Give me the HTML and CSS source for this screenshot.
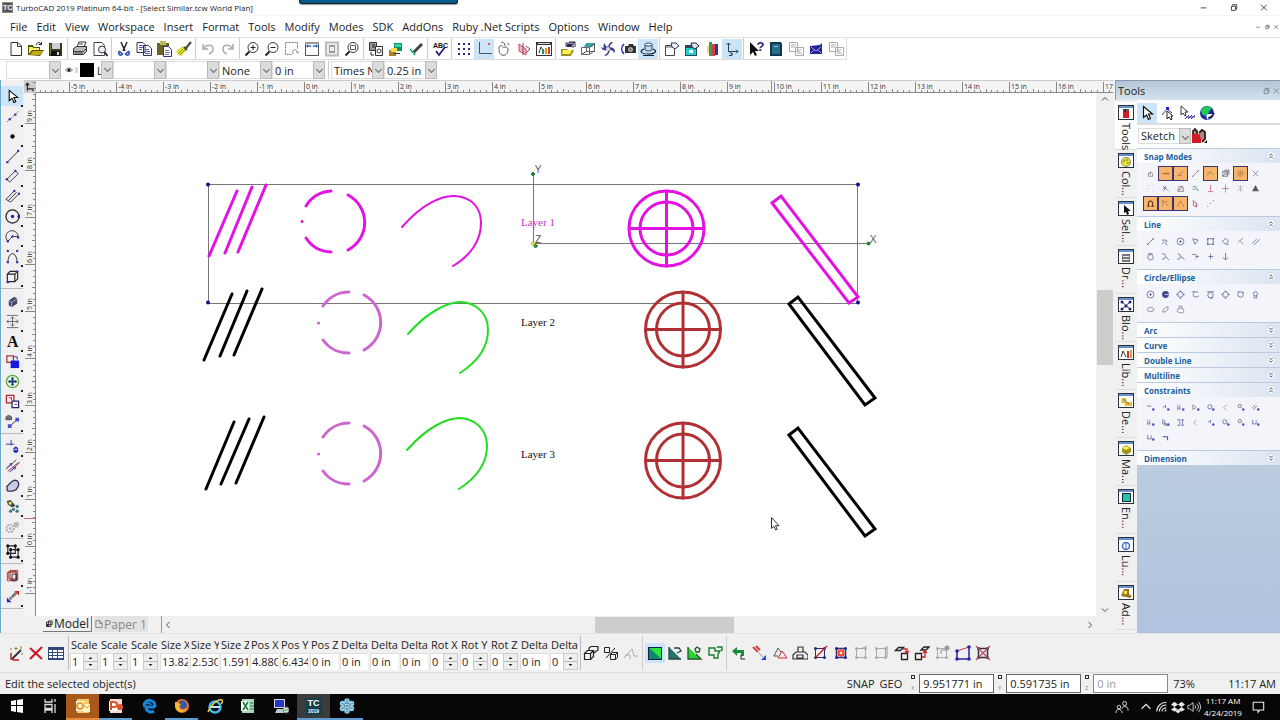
FILE: index.html
```html
<!DOCTYPE html>
<html lang="en">
<head>
<meta charset="utf-8">
<title>TurboCAD 2019 Platinum 64-bit - [Select Similar.tcw World Plan]</title>
<link rel="stylesheet" href="styles.css">
</head>
<body>
<header class="titlebar">
  <span class="app-badge">TC</span>
  <h1 class="app-title">TurboCAD 2019 Platinum 64-bit - [Select Similar.tcw World Plan]</h1>
  <div class="share-tab"></div>
  <div class="window-controls" data-icons="minimize restore close"></div>
</header>
<nav class="menubar">
  <button>File</button><button>Edit</button><button>View</button><button>Workspace</button><button>Insert</button><button>Format</button><button>Tools</button><button>Modify</button><button>Modes</button><button>SDK</button><button>AddOns</button><button>Ruby .Net Scripts</button><button>Options</button><button>Window</button><button>Help</button>
  <div class="doc-controls" data-icons="minimize restore close"></div>
</nav>
<div class="toolbar">
  <div class="group" data-icons="new open save"></div>
  <div class="group" data-icons="print preview"></div>
  <div class="group" data-icons="cut copy paste brush"></div>
  <div class="group" data-icons="undo redo"></div>
  <div class="group" data-icons="zoomin zoomout zoomwin extents fullview zoomsel"></div>
  <div class="group" data-icons="blocks layers pen"></div>
  <div class="group" data-icons="spell"></div>
  <div class="group" data-icons="grid *ortho hand mirror chart"></div>
  <div class="group" data-icons="openview box3d fan camera *orbit"></div>
  <div class="group" data-icons="props propsview palettes *axes"></div>
  <div class="group" data-icons="help book pagecopy mail pagecopy"></div>
</div>
<div class="propbar">
  <label class="combo wide"><select aria-label="Style"><option></option></select></label>
  <div class="layer-box"><span data-icon="eye"></span><span class="lockmark"></span><span class="swatch"></span></div>
  <label class="combo layer"><select aria-label="Layer"><option>L</option></select></label>
  <label class="combo"><select aria-label="Pen"><option></option></select></label>
  <label class="combo"><select aria-label="Pattern"><option></option></select></label>
  <label class="combo"><select aria-label="Brush"><option>None</option></select></label>
  <label class="combo"><select aria-label="Line width"><option>0 in</option></select></label>
  <span class="vsep"></span>
  <label class="combo"><select aria-label="Font"><option>Times New</option></select></label>
  <label class="combo"><select aria-label="Text height"><option>0.25 in</option></select></label>
</div>
<div class="workspace">
  <aside class="toolbox">
    <div class="vgroup" data-icons="*arrow cline point line dline mline circle arc spline cube"></div>
    <div class="vgroup" data-icons="solid dimension text modifyfill target swap edit"></div>
    <div class="vgroup" data-icons="snap parallel poly flash gears"></div>
    <div class="vgroup" data-icons="group"></div>
    <div class="vgroup" data-icons="redbox swaparrow"></div>
  </aside>
  <main class="document">
    <div class="ruler-row">
      <div class="origin" data-icon="origin"></div>
      <svg class="hruler" id="hruler" role="img" aria-label="Horizontal ruler"></svg>
    </div>
    <div class="canvas-row">
      <svg class="vruler" id="vruler" role="img" aria-label="Vertical ruler"></svg>
      <svg class="canvas" role="img" aria-label="Drawing">
        <g transform="translate(-36 -92)" fill="none" stroke-linecap="round">
          <g stroke="#777" stroke-width="1">
            <path d="M208.500 183.500H858M208.500 302.500H858M208.500 183V302M857.500 183V302M533.500 173V243M533 242.500H869"/>
          </g>
          <g stroke="#e312e3" stroke-width="3">
            <path d="M237 190L209 255M252 186L225 252M266 184L238 251"/>
            <path d="M306 205A31 31 0 0 1 331 190M348 194A31 31 0 0 1 348 249M306 237A31 31 0 0 0 331 251M302 220.500h.1"/>
            <path stroke-width="2" d="M402 226C423 202 443 194 455 195C471 196 481 206 481 222C481 240 470 255 453 265"/>
            <g id="wheel"><circle cx="666.500" cy="227.500" r="37.500"/><circle cx="666.500" cy="227.500" r="26.500"/><path d="M629 227.500h75M666.500 190v75"/></g>
            <path d="M772 202L781 195L858 296L849 302Z"/>
          </g>
          <g stroke="#000" stroke-width="3">
            <path d="M232 293L204 359M247 290L220 355M262 288L234 354"/>
            <path d="M789 303L798 296L875 397L865 404Z"/>
            <path d="M234 421L206 488M249 418L221 483M264 416L236 482"/>
            <path d="M789 434L798 427L875 528L865 535Z"/>
          </g>
          <g stroke="#cc66cc" stroke-width="3">
            <path id="dash" d="M323 305A31 31 0 0 1 349 291M364 294A31 31 0 0 1 364 349M323 339A31 31 0 0 0 349 352M318.500 322h.1"/>
            <path d="M323 436A31 31 0 0 1 349 422M364 425A31 31 0 0 1 364 480M323 470A31 31 0 0 0 349 483M318.500 453h.1"/>
          </g>
          <g stroke="#22dd22" stroke-width="2">
            <path d="M408 333C429 309 449 301 461 301C477 302 488 313 488 329C488 347 477 361 460 372"/>
            <path d="M407 449C428 425 448 417 460 417C476 418 487 429 487 445C487 463 476 477 459 488"/>
          </g>
          <g stroke="#b03034" stroke-width="3">
            <circle cx="683" cy="328.500" r="37.500"/><circle cx="683" cy="328.500" r="26.500"/><path d="M646 328.500h74M683 291v75"/>
            <circle cx="683" cy="459.500" r="37.500"/><circle cx="683" cy="459.500" r="26.500"/><path d="M646 459.500h74M683 422v75"/>
          </g>
          <g fill="#10108a"><circle cx="208" cy="183.500" r="2"/><circle cx="858" cy="183.500" r="2"/><circle cx="208" cy="301.500" r="2"/><circle cx="858" cy="301.500" r="2"/></g>
          <g fill="#2fa048" stroke="#186c2c"><circle cx="533" cy="173" r="1.500"/><circle cx="868.500" cy="242.500" r="1.500"/><circle cx="535.500" cy="245" r="1.500"/><circle cx="533" cy="242.500" r="1.500" fill="#ff8" stroke="#aa0"/></g>
          <g class="axis-text"><text x="535" y="172">Y</text><text x="535" y="242">Z</text><text x="870" y="242">X</text></g>
          <g class="layer-text"><text class="pick" x="521" y="225">Layer 1</text><text x="521" y="325">Layer 2</text><text x="521" y="457">Layer 3</text></g>
          <path d="M771.500 517v10.500l2.400-2.200 1.700 3.700 1.600-.8-1.700-3.500h3.200z" fill="#fff" stroke="#333"/>
        </g>
      </svg>
      <div class="vscroll"><span data-icon="up"></span><i class="track-a"></i><i class="thumb"></i><i class="track-b"></i><span data-icon="down"></span></div>
    </div>
    <div class="sheet-row">
      <div class="sheet-pad"></div>
      <button class="sheet active"><span data-icon="model"></span>Model</button>
      <button class="sheet"><span data-icon="sheet"></span>Paper 1</button>
      <div class="hscroll"><span data-icon="left"></span><i class="track-a"></i><i class="thumb"></i><i class="track-b"></i><span data-icon="right"></span></div>
    </div>
  </main>
  <aside class="dock">
    <header class="dock-head"><h2>Tools</h2><span class="dock-ctl" data-icons="restore close"></span></header>
    <div class="dock-body">
      <nav class="dock-tabs">
        <button class="on"><span data-icon="t-tools"></span>Tools</button>
        <button><span data-icon="t-color"></span>Col...</button>
        <button><span data-icon="t-select"></span>Sel...</button>
        <button><span data-icon="t-draw"></span>Dr...</button>
        <button><span data-icon="t-blocks"></span>Blo...</button>
        <button><span data-icon="t-library"></span>Lib...</button>
        <button><span data-icon="t-design"></span>De...</button>
        <button><span data-icon="t-material"></span>Ma...</button>
        <button><span data-icon="t-environment"></span>En...</button>
        <button><span data-icon="t-luminance"></span>Lu...</button>
        <button><span data-icon="t-advanced"></span>Ad...</button>
      </nav>
      <div class="palette">
        <div class="palette-top">
          <div class="group plain" data-icons="*arrow nodeedit multiedit globe"></div>
          <div class="palette-pick"><label class="combo"><select aria-label="Tool set"><option>Sketch</option></select></label><span data-icon="toolbag"></span></div>
        </div>
        <section><h3>Snap Modes<span data-icon="collapse"></span></h3><div class="tiles" data-icons="s-hand *s-mid *s-vertex s-red *s-arc s-box *s-center s-x s-dots s-mag s-quad s-curve s-tee s-plus s-star s-tree *s-magnet *s-apex *s-tan s-pink s-pts"></div></section>
        <section><h3>Line<span data-icon="collapse"></span></h3><div class="tiles" data-icons="l-line l-poly l-center l-tri l-rect l-rot l-perp l-par l-circ l-tan l-tan2 l-tan3 l-cross l-down"></div></section>
        <section><h3>Circle/Ellipse<span data-icon="collapse"></span></h3><div class="tiles" data-icons="l-center c-solid c-dots c-open c-tan c-dots c-ear c-pin c-ell c-rotell c-cap"></div></section>
        <section><h3>Arc<span data-icon="expand"></span></h3></section>
        <section><h3>Curve<span data-icon="expand"></span></h3></section>
        <section><h3>Double Line<span data-icon="expand"></span></h3></section>
        <section><h3>Multiline<span data-icon="expand"></span></h3></section>
        <section><h3>Constraints<span data-icon="collapse"></span></h3><div class="tiles" data-icons="k-a k-b k-c k-d k-e k-f k-g k-h k-c k-i k-j k-f k-b k-e k-g k-k k-k k-l"></div></section>
        <section><h3>Dimension<span data-icon="expand"></span></h3></section>
      </div>
    </div>
  </aside>
</div>
<div class="inspector">
  <div class="group plain first" data-icons="wand delete table"></div>
  <div class="fields" id="fields"></div>
  <div class="group" data-icons="cubes cubes2 graynode"></div>
  <div class="group" data-icons="*fillbox fillpart fillnode outline"></div>
  <div class="group spread" data-icons="back rotate triangles stack scale gridred graybox graybox2 copybox copybox2 graybox3 skew nobox"></div>
</div>
<footer class="statusbar">
  <span class="hint">Edit the selected object(s)</span>
  <span class="flag">SNAP</span><span class="flag">GEO</span>
  <label class="coord"><span><b></b>X</span><input aria-label="X coordinate" value="9.951771 in"></label>
  <label class="coord"><span><b></b>Y</span><input aria-label="Y coordinate" value="0.591735 in"></label>
  <label class="coord"><span><b></b>Z</span><input class="dim" aria-label="Z coordinate" value="0 in"></label>
  <span class="zoomval">73%</span><span class="time">11:17 AM</span>
</footer>
<div class="taskbar">
  <button aria-label="Start"><span data-icon="w-start"></span></button>
  <button aria-label="Task view"><span data-icon="w-tasks"></span></button>
  <button class="alert" aria-label="Outlook"><span data-icon="w-outlook"></span></button>
  <button class="run" aria-label="PowerPoint"><span data-icon="w-ppt"></span></button>
  <button aria-label="Edge"><span data-icon="w-edge"></span></button>
  <button class="run" aria-label="Firefox"><span data-icon="w-firefox"></span></button>
  <button aria-label="Internet Explorer"><span data-icon="w-ie"></span></button>
  <button aria-label="Excel"><span data-icon="w-excel"></span></button>
  <button aria-label="Remote desktop"><span data-icon="w-remote"></span></button>
  <button class="run current" aria-label="TurboCAD"><span class="tc">TC<small>2019</small></span></button>
  <button class="run" aria-label="GoToWebinar"><span data-icon="w-flower"></span></button>
  <div class="tray">
    <span class="people" data-icon="w-people"></span><span data-icon="w-up"></span><span data-icon="w-wifi"></span><span data-icon="w-dropbox"></span><span data-icon="w-sound"></span>
    <div class="clock"><span>11:17 AM</span><span>4/24/2019</span></div>
    <span data-icon="w-note"></span>
  </div>
</div>
<script src="app.js"></script>
</body>
</html>
```

FILE: styles.css
```css
* { box-sizing: border-box; }
body { margin: 0; height: 100vh; min-height: 720px; display: flex; flex-direction: column; overflow: hidden; background: #fff; color: #222; font: 11px "Open Sans", "Noto Sans", sans-serif; }
button { margin: 0; padding: 0; border: 0; background: none; font: inherit; color: inherit; }
h1, h2, h3 { margin: 0; font-weight: normal; }
svg { display: block; flex: none; }
[data-icon] { display: flex; align-items: center; justify-content: center; flex: none; }

.titlebar { flex: none; height: 16px; display: flex; align-items: center; padding: 0 2px; position: relative; border-bottom: 1px solid #f6f6f6; }
.app-badge { width: 11px; height: 11px; background: #555; border: 1px solid #888; color: #fff; font: bold 7px/9px "Liberation Sans", sans-serif; text-align: center; margin-right: 3px; }
.app-title { font-size: 8px; line-height: 15px; }
.share-tab { position: absolute; left: 299px; top: 0; width: 159px; height: 4px; background: #0a5a8c; border: 1px solid #123; border-top: 0; border-radius: 0 0 3px 3px; box-shadow: 0 1px 1px #999; }
.window-controls { margin-left: auto; display: flex; }
.window-controls button { width: 30px; display: flex; justify-content: center; }
.menubar { flex: none; height: 22px; display: flex; align-items: center; padding-left: 10px; gap: 9px; border-bottom: 1px solid #e2e2e2; }
.doc-controls { margin-left: auto; display: flex; }
.doc-controls button { width: 9px; display: flex; justify-content: center; }
.doc-controls svg { width: 8px; height: 8px; }

.toolbar { flex: none; align-self: flex-start; height: 22px; display: flex; padding-left: 6px; border: solid #ddd; border-width: 0 1px 1px 0; }
.group { display: flex; align-items: center; flex: none; }
.group + .group { margin-left: 1px; padding-left: 2px; border-left: 1px solid #ccc; }
.group button { width: 20px; height: 20px; display: flex; align-items: center; justify-content: center; }
.group .active, .vgroup .active { background: #cce4f7; }
.propbar { flex: none; height: 20px; display: flex; align-items: center; padding: 1px 6px; }
.combo { position: relative; display: flex; width: 53px; height: 18px; flex: none; border: 1px solid #ddd; border-right: 0; background: #fff; }
.combo.wide { width: 55px; }
.combo.layer { width: 18px; border: 0; }
.combo select { appearance: none; width: 100%; margin: 0; padding: 0 9px 0 2px; border: 0; border-radius: 0; background: none; font: inherit; color: #222; outline: 0; }
.combo.layer select { padding: 0 0 0 2px; }
.combo::before { content: ""; position: absolute; right: 0; top: -1px; bottom: -1px; width: 10px; background: #dcdcdc; border: 1px solid #bbb; }
.combo.layer::before { top: 0; bottom: 0; }
.combo::after { content: ""; position: absolute; right: 3px; top: 5px; width: 4px; height: 4px; border: solid #666; border-width: 0 1px 1px 0; transform: rotate(45deg); }
.layer-box { display: flex; align-items: center; justify-content: flex-end; width: 34px; gap: 2px; padding-right: 1px; }
.lockmark { width: 3px; height: 6px; background: #ddd; }
.swatch { width: 14px; height: 14px; background: #000; }
.vsep { width: 1px; height: 18px; margin: 0 2px 0 3px; background: #ccc; }

.workspace { flex: 1; min-height: 0; display: flex; background: #f0f0f0; border-bottom: 1px solid #e4e4e4; }
.toolbox { flex: none; width: 24px; padding: 6px 1px 0 0; border-left: 1px solid #6fa8c8; }
.vgroup { border-bottom: 1px solid #bbb; margin-bottom: 2px; padding-bottom: 2px; }
.vgroup button { position: relative; width: 22px; height: 20px; display: flex; align-items: center; justify-content: center; }
.vgroup button::after { content: ""; position: absolute; right: 0; bottom: -1px; width: 2px; height: 2px; background: #222; }
.document { flex: 1; min-width: 0; display: flex; flex-direction: column; }
.ruler-row { flex: none; height: 13px; display: flex; border-top: 1px solid #ccc; }
.origin { width: 12px; background: #ccc; }
.hruler { flex: 1; min-width: 0; height: 12px; background: #f4f4f4; }
.vruler { width: 12px; height: 100%; background: #f4f4f4; overflow: visible; }
.hruler text, .vruler text { font: 7px "Open Sans", sans-serif; fill: #333; }
.hruler path, .vruler path { stroke: #888; fill: none; }
.canvas-row { flex: 1; min-height: 0; display: flex; }
.canvas { flex: 1; min-width: 0; height: 100%; background: #fff; }
.axis-text text { font: 11px "Open Sans", sans-serif; fill: #555; }
.layer-text text { font: 11px "Liberation Serif", serif; fill: #111; }
.layer-text .pick { fill: #cc33cc; }
.vscroll { flex: none; width: 17px; display: flex; flex-direction: column; align-items: center; padding: 0; }
.vscroll span, .hscroll span { width: 12px; height: 12px; }
.thumb { background: #cdcdcd; }
.vscroll .thumb { width: 16px; flex: 75; }
.vscroll .track-a { flex: 186; }
.vscroll .track-b { flex: 240; }
.sheet-row { flex: none; height: 17px; display: flex; font-size: 12px; }
.sheet-pad { width: 19px; }
.sheet { display: flex; align-items: center; width: 49px; height: 16px; padding: 0 0 0 1px; border: solid #777; border-width: 0 1px 1px 0; line-height: 15px; white-space: nowrap; }
.sheet:not(.active) { width: 54px; margin-left: 2px; padding: 0; border: 0; color: #888; background: #e3e3e3; }
.hscroll { flex: 1; display: flex; align-items: center; margin: 0 17px 0 13px; border-left: 1px solid #999; }
.hscroll .thumb { height: 16px; flex: 140; }
.hscroll .track-a { flex: 421; }
.hscroll .track-b { flex: 350; }

.dock { flex: none; width: 165px; margin-left: 2px; display: flex; flex-direction: column; }
.dock-head { height: 20px; flex: none; display: flex; align-items: center; justify-content: space-between; padding-left: 2px; background: linear-gradient(#b3c6da, #d5e2ef); border-top: 1px solid #8898a8; border-left: 1px solid #99a; }
.dock-head h2 { font-size: 11px; line-height: 18px; }
.dock-ctl { display: flex; opacity: .5; }
.dock-ctl button { width: 10px; }
.dock-ctl svg { width: 12px; height: 12px; }
.dock-body { flex: 1; min-height: 0; display: flex; }
.dock-tabs { flex: none; width: 22px; display: flex; flex-direction: column; padding-top: 2px; }
.dock-tabs button { height: 48px; flex: none; writing-mode: vertical-rl; display: flex; align-items: center; gap: 3px; padding-top: 3px; border-bottom: 1px solid #ddd; font-size: 11px; line-height: 20px; white-space: nowrap; }
.dock-tabs button.on { background: #fff; }
.dock-tabs [data-icon] { width: 17px; height: 15px; }
.palette { flex: 1; min-width: 0; background: linear-gradient(#c6d3de, #b9cbdf 75%, #b0c2dd); }
.palette-top { height: 48px; background: #fff; padding-top: 2px; }
.palette-top .group { border-bottom: 2px solid #ddd; height: 23px; }
.palette-pick { display: flex; align-items: center; height: 21px; padding-left: 1px; }
.palette-pick .combo { height: 16px; line-height: 14px; }
.palette section { background: #f3f5fa; }
.palette h3 { display: flex; justify-content: space-between; align-items: center; height: 15px; padding: 0 2px 0 7px; border-top: 1px solid #b8cbe0; background: linear-gradient(90deg, #fff, #dce5f1); color: #1b5f9c; font-size: 8px; font-weight: bold; }
.tiles { display: grid; grid-template-columns: repeat(8, 15px); grid-auto-rows: 15px; padding: 3px 0 5px 6px; }
.tiles button { display: flex; align-items: center; justify-content: center; }
.tiles .active { background: #f6b56a; border: 1px solid #3c3470; }

.inspector { flex: none; height: 39px; display: flex; align-items: center; background: #f0f0f0; border-bottom: 1px solid #ddd; padding-left: 6px; }
.inspector .group { height: 34px; }
.inspector .first { padding-right: 2px; border-right: 1px solid #bbb; margin-right: 1px; }
.fields { display: flex; }
.field { width: 30px; flex: none; }
.field label { display: block; width: 29px; overflow: hidden; white-space: nowrap; line-height: 16px; padding-left: 1px; }
.spin { display: flex; height: 17px; padding-right: 2px; }
.spin input { min-width: 0; width: 100%; flex: 1; border: solid #ddd; border-width: 1px 0 0 1px; background: #fff; padding: 0 0 0 1px; font: inherit; color: #222; }
.spin span { width: 15px; flex: none; display: flex; align-items: center; justify-content: center; background: #eee; border: 1px solid #ccc; }
.fields + .group { border-left: 1px solid #bbb; }
.spread { width: 267px; justify-content: space-between; }

.statusbar { flex: none; height: 21px; display: flex; align-items: center; background: #f0f0f0; padding: 0 4px 0 5px; white-space: nowrap; }
.hint { flex: 1; }
.flag { margin-right: 5px; }
.coord { display: flex; align-items: center; height: 19px; margin-left: 4px; }
.coord > span { width: 8px; font-size: 5px; line-height: 7px; color: #777; display: flex; flex-direction: column; gap: 6px; }
.coord b { width: 4px; height: 4px; border: 1px solid #333; }
.coord input { width: 75px; height: 19px; border: 1px solid #666; background: #fff; padding: 0 3px; font: inherit; color: #222; }
.coord .dim { color: #999; border-color: #888; }
.zoomval { width: 55px; margin-left: 5px; }

.taskbar { flex: none; height: 26px; display: flex; background: #070707; color: #fff; }
.taskbar > button { width: 33px; display: flex; align-items: center; justify-content: center; border-bottom: 2px solid transparent; }
.taskbar .run { border-bottom-color: #5e9bd0; }
.taskbar .alert { background: #a85a1c; border-bottom-color: #e88a3a; }
.taskbar .current { background: #3b3b3b; }
.tc { width: 16px; height: 17px; background: #123f50; font: bold 9px/11px "Liberation Sans", sans-serif; text-align: center; }
.tc small { display: block; font-size: 5px; line-height: 5px; }
.tray { margin-left: auto; display: flex; align-items: center; padding-right: 14px; }
.tray > [data-icon] { width: 16px; }
.tray .people { width: 32px; }
.tray svg { width: 14px; height: 14px; }
.clock { display: flex; flex-direction: column; align-items: center; width: 42px; margin-right: 6px; font-size: 8px; line-height: 12px; white-space: nowrap; }
```

FILE: app.js
```javascript
const s = (d, c = '#222', w = 1, f = 'none') => `<path d="${d}" stroke="${c}" stroke-width="${w}" fill="${f}"/>`;
const f = (d, c) => `<path d="${d}" fill="${c}"/>`;
const nodes = (pts, c = '#33a', r = 1.3) => pts.map(([x, y]) => `<circle cx="${x}" cy="${y}" r="${r}" fill="${c}"/>`).join('');
const lens = s('M5.500 10.500L1.500 14.500', '#222', 2) + '<circle cx="9" cy="6.500" r="5" fill="#fff" stroke="#333"/>';
const tag = inner => f('M0 0h16v15H0z', '#26333f') + f('M1 3h14v11H1z', '#fff') + f('M1 1h14v2H1z', '#6a90cc') + inner;
const tile = (bg, inner) => f('M2 1h12v14H2z', bg) + f('M1 3h8v10H1z', '#fff') + inner;
const box = (c, w = 1) => s('M3.500 3.500h9v9h-9z', c, w) + nodes([[3.500, 3.500], [12.500, 3.500], [3.500, 12.500], [12.500, 12.500]], c, 1.5);

const icons = {
  minimize: s('M4.500 8.500h7'), restore: s('M5.500 6.500h5v5h-5zM7 6V4.500h5V10h-1'), close: s('M5 4.500l7 7M12 4.500l-7 7'),
  up: s('M5 9.500l3-3 3 3', '#555'), down: s('M5 6.500l3 3 3-3', '#555'), left: s('M9.500 5l-3 3 3 3', '#555'), right: s('M6.500 5l3 3-3 3', '#555'),
  new: s('M3 1.500h7l3.500 3.500v9.500H3zM9.500 1.500v4h4', '#333', 1, '#fff'),
  open: f('M0 14V4h5l1 2h6v3h4l-4 6z', '#555500') + f('M1 6h3l2 1h5v2H4L1 13z', '#ffee70') + f('M5 10h10l-3 4H2z', '#c5a810') + s('M8 4c2-4 4-3 5 0M10.500 3.500h3V1'),
  save: f('M1 2h13v13H1z', '#333a20') + f('M4 2h8v6H4z', '#c9d0d8') + f('M3 10h9v5H3z', '#111') + f('M9 11h2v3H9z', '#ddd') + f('M2 3h1v10H2z', '#798030'),
  print: s('M5 6l2-5h7l-2 5z', '#333', 1, '#fff') + s('M1.500 7.500l3-2h10v5l-3 3h-10z', '#333', 1, '#b9b9b9') + s('M2 10.500h9.500l3-3M3 12h8M7 3h4', '#444'),
  preview: s('M2 1.500h8l2.500 3v10H2z', '#444', 1, '#fff') + '<circle cx="10" cy="8.500" r="3.500" fill="#eef" stroke="#333"/>' + s('M12.500 11l3 4', '#333', 2),
  cut: s('M5 1l4 9M11 1L7 10', '#223', 1.500) + s('M3.500 10.500a2 2 0 1 0 3 2.500zM12.500 10.500a2 2 0 1 1-3 2.500z', '#2450b8', 1.600),
  copy: s('M1 1.500h6l2 2v8H1zM7.500 4.500h5l3 3v7h-8z', '#334', 1, '#fff') + s('M3 4.500h4M3 6.500h4M3 8.500h3M9 8.500h4M9 10.500h5M9 12.500h5', '#55b'),
  paste: f('M1 2h12v12H1z', '#67652a') + f('M4 0h6v4H4z', '#b9bd60') + s('M7.500 5.500h5l3 3v7h-8z', '#338', 1, '#fff') + s('M9 9.500h4M9 11.500h5M9 13.500h4', '#77b'),
  brush: f('M1 9l6-4 4 4-6 6-3-1 1-2-3 0z', '#dfe53c') + s('M2 13l5-5M4 14l5-5', '#889010') + s('M8 6l3 3M10 7l5-6', '#444', 2),
  undo: s('M3 3v5h5M3.500 8C6 3 13 3 13 8c0 2-1 4-4 5', '#aaa', 1.500), redo: s('M13 3v5H8M12.500 8C10 3 3 3 3 8c0 2 1 4 4 5', '#aaa', 1.500),
  zoomin: lens + s('M6.500 6.500h5M9 4v5'), zoomout: lens + s('M6.500 6.500h5'),
  zoomwin: '<path d="M1.500 1.500h12v12h-12z" fill="none" stroke="#777" stroke-dasharray="2 1"/>' + f('M8 8h6v6H8z', '#fff') + s('M9 13c-2-5 5-6 4-1l2-1', '#888'),
  extents: s('M1.500 1.500h13v13h-13z', '#555', 1, '#fff') + f('M1 1h14v2H1z', '#999') + s('M3 5h4M9 5h4', '#2463c8', 1.500) + f('M2 5l2-2v4zM14 5l-2-2v4z', '#2463c8'),
  fullview: s('M2 1.500h12v13H2z', '#bbb', 2, '#eee') + f('M5 4h6v8H5z', '#999') + f('M6 6h4v4H6z', '#eee'),
  zoomsel: lens + s('M6.500 4.500h5v4h-5z', '#557'),
  blocks: s('M1.500 1.500h7v8h-7z', '#333', 1, '#999') + s('M7.500 5.500h7v9h-7z', '#333', 1, '#fff') + '<circle cx="11" cy="10" r="2" fill="none" stroke="#333"/>' + s('M3 11v3h3M4 4h3M4 6h3'),
  layers: f('M6 2h8v8H6z', '#118d75') + f('M7 3h6v3H7z', '#25e09a') + f('M1 9h7v6H1z', '#a88120') + f('M3 7h6v4H3z', '#ffd94d') + f('M6 12h6v1H6z', '#333'),
  pen: s('M5 12l9-9', '#444', 3) + s('M2 8l5 6', '#0a6', 1.500) + s('M4 13l2-2', '#eee'),
  spell: '<text x="1" y="7" font-size="7" font-weight="bold" font-family="Liberation Sans" fill="#111">ABC</text>' + s('M4 10l3 4 6-8', '#28286e', 1.800),
  grid: [3, 8, 13].map(x => [3, 8, 13].map(y => `<path d="M${x - 1} ${y - 1}h2v2h-2z" fill="#2b2b98"/>`).join('')).join(''),
  ortho: s('M3.500 1v11.500H16', '#555') + f('M12 2h2v2h-2z', '#e34a7a'),
  hand: s('M3 6c2-3 4 0 5 1 1-2 4-1 4 2 0 4-3 6-6 5-3-1-3-5-3-8zM5 2c2-2 4 0 4 3M12 2l1 2', '#555'),
  mirror: s('M3 3l7 5v6L3 10z', '#c64b70', 1, '#f3b4c8') + s('M7 2v12M10 5l4 3-4 4', '#944'),
  chart: f('M0 1h16v14H0z', '#333') + f('M1 4h14v10H1z', '#fff') + f('M2 2h12v1H2z', '#ccd') + s('M3 12l2-6 3 5', '#333') + f('M6 8h2v5H6z', '#287') + f('M9 7h2v6H9z', '#c8a020') + f('M12 6h2v7h-2z', '#d33'),
  openview: f('M1 8h6l1 1h6l-3 6H1z', '#97901a') + f('M3 9h9l-2 4H2z', '#ffee57') + s('M6 6V2h7v5M13 2l2-1M9 1h6v5', '#224') + f('M7 3h5v3H7z', '#226'),
  box3d: s('M1.500 6.500h8v7h-8zM6.500 3v7.500H15', '#667') + f('M6 2h9l-3 4H4z', '#32a5a7') + s('M9.500 6.500l5-4v7l-5 4M2 13l5-3', '#555'),
  fan: f('M8 8C3 8 2 5 5 2c0 3 2 4 3 4 1-5 4-6 5-4-3 1-3 3-3 4 5 1 6 4 4 6-1-3-3-3-4-3-1 5-4 7-6 5 4-1 4-4 4-5-4 1-6 0-7-3 3 2 5 1 7-1z', '#44448e') + nodes([[8, 8]], '#ddd', 2),
  camera: f('M5 5h3l1-2h4l1 2h2v7H5z', '#333') + nodes([[10.500, 8.500]], '#ddd', 2.3) + nodes([[10.500, 8.500]], '#555', 1.2) + s('M4 3c-3 3-3 7 0 10', '#22a', 1.500),
  orbit: s('M5 3.500v5c0 2 7 2 7 0v-5', '#245', 1, '#bfd6e8') + '<ellipse cx="8.500" cy="3.500" rx="3.500" ry="1.500" fill="#fff" stroke="#245"/>' + s('M4 8c-5 2-3 5 4 5s10-3 5-5M3 14.500h11', '#123', 1.200),
  props: s('M1.500 4.500h9v10h-9z', '#444', 1, '#fff') + f('M2 5h8v2H2z', '#aaa') + s('M7 2h5l3 3-4 3-3-2z', '#336', 1, '#eef'),
  propsview: f('M1 4h12v11H1z', '#234b58') + f('M2 7h10v7H2z', '#26cfcf') + f('M5 9h4v3H5z', '#fff') + s('M7 2h5l3 3-4 3-3-2z', '#224', 1, '#dde'),
  palettes: f('M5 1h3v14H5z', '#2da247') + f('M8 3h3v12H8z', '#d83a4e') + f('M11 3h3v11h-3z', '#2c3895') + f('M3 5h2v7H3z', '#fc8'),
  axes: s('M4.500 2v8.500H14M4.500 10l4 4M2.500 4l2-2 2 2M12 8.500l2 2-2 2M8 11.500v3H5', '#245'),
  help: f('M2 1v13l3-3 2 4 2-1-2-4h4z', '#111') + '<text x="8.500" y="10" font-size="13" font-weight="bold" font-family="Liberation Sans" fill="#25257c">?</text>',
  book: f('M2 1h11l1 2v12H2z', '#12384f') + f('M4 3h8v10H4z', '#286d8b') + s('M6 5.500h4', '#9bd'),
  pagecopy: s('M1.500 1.500h8v9h-8zM7.500 6.500h8v8h-8z', '#aaa', 1, '#fff') + s('M3 4h5M3 6h4M9 9l5 4M9 12h3M13 9h-3', '#aaa'),
  mail: f('M2 5l10-1 2-2v11H2z', '#222395') + s('M3 6l5 4 5-4M3 12l4-4M13 12l-4-4', '#8e9af0'),
  eye: s('M1 8q7-8 14 0-7 7-14 0z', '#444', 1.500, '#fff') + nodes([[8, 8]], '#111', 3),
  arrow: s('M4.500 1.500v11l3-2.500 2 4.500 2-1-2-4.500h4z', '#111', 1.200, '#fff'),
  cline: '<path d="M2 14L15 2" stroke="#777" stroke-dasharray="2 1"/>' + nodes([[5, 11], [11, 6]]), point: nodes([[8, 8]], '#000', 2.3),
  line: s('M3 13.500L14 2.500', '#222') + nodes([[2.500, 14], [14, 2]]),
  dline: s('M2 11l9-9 3 3-9 9z', '#333') + nodes([[2, 11], [11, 2]]),
  mline: s('M1 11l9-9M3.500 12.500l9-9M6 14l9-9M1 11l5 3', '#333') + nodes([[10, 2], [15, 5]]),
  circle: '<circle cx="8" cy="8" r="7" fill="none" stroke="#222" stroke-width="1.300"/>' + nodes([[8, 8], [15, 8]], '#22a', 1.8),
  arc: s('M3 13a6.500 6.500 0 1 1 11-5H8l-5 5', '#333') + nodes([[8, 8], [14, 9], [3, 13]]),
  spline: s('M3 14C4 2 12 2 13 14', '#222') + nodes([[3, 2], [13, 2], [3, 14], [13, 14]]),
  cube: s('M2.500 5.500h8v8h-8zM2.500 5.500l3-3h8v8l-3 3M10.500 5.500l3-3', '#222', 1.200) + nodes([[3, 14], [13, 3]]),
  solid: f('M4 7l6-4 3 2v5l-6 4-3-2z', '#444766') + s('M4 7l3 2 6-4M7 9v5', '#aac'),
  dimension: s('M2 1.500h12M2 14.500h12M8 3v10M2 8h12M6 5l2-2 2 2M6 11l2 2 2-2M4 6L2 8l2 2M12 6l2 2-2 2', '#666'),
  text: '<text x="2" y="14" font-size="17" font-weight="bold" font-family="Liberation Serif" fill="#111">A</text>',
  modifyfill: s('M2 2h7v7H2z', '#a34', 1.300) + f('M6 7h9v8H6z', '#1919dc') + s('M9 3h4v3', '#338'),
  target: '<circle cx="8" cy="8" r="6.500" fill="#efffe8" stroke="#63a83a" stroke-width="1.500"/>' + f('M8 3l2 2H9v2h2V6l2 2-2 2V9H9v2h1l-2 2-2-2h1V9H5v1L3 8l2-2v1h2V5H6z', '#223a80'),
  swap: s('M1.500 1.500h8v8h-8z', '#a23', 1.300, '#fee') + s('M7.500 7.500h7v7h-7z', '#227', 1.300, '#fff') + s('M4 4h3v3M10 11h3', '#a23'),
  edit: s('M1 4c0-3 6-3 6 0v2H1z', '#444', 1, '#777') + s('M5 13l8-7', '#333') + f('M3 11h4v4H3zM11 4h4v4h-4z', '#4a50cc'),
  snap: s('M1 5.500h9M6.500 1v6', '#33a') + f('M9 10q2.500-4 5 0v3q-2.500 4-5 0z', '#2831cc') + s('M10 11h3', '#fff'),
  parallel: s('M1 11L12 1M5 14L16 3', '#444') + s('M3 13L14 4', '#a23') + s('M2 9l5-4M6 13l5-4M5 5h2v2M9 9h2v2', '#33b'),
  poly: s('M2 8l5-5c5-4 9 0 7 5-2 5-6 5-10 5-3 0-1-3-2-5z', '#335', 1.400, '#c7cce4'),
  flash: f('M2 2l4-1 5 6-3 2-5-3z', '#444') + f('M4 3h3v3H4z', '#f6e64d') + nodes([[9, 11], [13, 8], [13, 13], [6, 13]], '#477b80', 1.8),
  gears: '<circle cx="5.500" cy="10" r="4" fill="none" stroke="#aaa" stroke-width="2" stroke-dasharray="2 1"/><circle cx="12" cy="6" r="3" fill="#bbb"/>' + nodes([[5.500, 10]], '#bbb', 1.6),
  group: s('M3 2h8v8H3zM6 6h8v8H6z', '#224', 1.200) + nodes([[3, 2], [11, 2], [3, 10], [6, 6], [14, 6], [6, 14], [14, 14]], '#111', 1.7),
  redbox: s('M2.500 3.500h9v9h-9zM5.500 1.500h8v10h-8zM4 2.500h8v8H4z', '#a33') + s('M7.500 5.500h5v7h-5z', '#333'),
  swaparrow: f('M2 9v5h5z', '#22b') + f('M10 2h5v5z', '#d22') + s('M5 11l7-7', '#777', 3) + s('M6 8l4 4', '#eee'),
  origin: s('M4.500 13V3.500M2 6l2.500-3L7 6M5 10.500h7v3', '#222', 1.500),
  model: s('M4 5h7v7H4zM7 3h6v6H7z', '#333', 1.500) + nodes([[6, 10]], '#222', 2), sheet: s('M3 2.500h6l4 4v7H3zM9 3v4h4', '#555'),
  nodeedit: s('M3 10l5-6 5 4', '#336') + f('M7 2h3v3H7z', '#22d') + s('M8 6v8l2-2 2 3 1-1-1-3h2z', '#222', 1, '#fff'),
  multiedit: s('M2 1v9l2-2 2 3 1-1-1-3h3z', '#333', 1, '#fff') + s('M6 14l4-4M9 14l4-4M12 14l4-4M7 12h9', '#339'),
  globe: '<circle cx="8" cy="8" r="7" fill="#172a9c"/>' + f('M2 5c2-4 9-5 10-2 1 2-2 2-2 4s-3 1-3 4c-3 0-5-3-5-6z', '#1fcc53') + f('M8 9h6l-5 6c-2-2-2-4-1-6z', '#fff') + s('M9 13c3-1 5-2 6-5', '#125', 1.500),
  toolbag: f('M1 6h9v9H1z', '#d21822') + s('M2 6V3l2-2 2 2v3M8 5l3-3 3 2v7l-3 3', '#321', 1.800, '#a88') + f('M13 15h3v-3z', '#111'),
  collapse: '<circle cx="8" cy="8" r="5" fill="#f8faff" stroke="#ccd8e8"/>' + s('M6 7.500l2-2 2 2M6 10.500l2-2 2 2', '#345'),
  expand: '<circle cx="8" cy="8" r="5" fill="#f8faff" stroke="#ccd8e8"/>' + s('M6 5.500l2 2 2-2M6 8.500l2 2 2-2', '#345'),
  wand: s('M4 14L13 5', '#333', 2) + s('M3 8v6l3 1h5', '#b22', 1.500) + s('M8 2v3M6.500 3.500h3M13 1v3M3 3v2M14 8v2', '#997819'),
  delete: s('M2 3l12 11M14 2L2 14', '#c91524', 2), table: f('M0 2h16v13H0z', '#33477b') + f('M1 5h3v2H1zM5 5h4v2H5zM10 5h5v2h-5zM1 8h3v2H1zM5 8h4v2H5zM10 8h5v2h-5zM1 11h3v2H1zM5 11h4v2H5zM10 11h5v2h-5z', '#fff'),
  cubes: s('M1.500 8.500h6v6h-6zM1.500 8.500l3-3h6l-3 3M10.500 5.500v6l-3 3M6 5V3l2-1.500h7V5l-4 3', '#222', 1.200),
  cubes2: s('M1.500 2.500h5v5h-5zM7.500 9.500h5v5h-5zM7.500 9.500l2-2h5v5l-2 2M12.500 9.500l2-2M3 13L12 3', '#222'), graynode: s('M1 13l8-9 2 7h4M2 10h5v4', '#aaa'),
  fillbox: f('M1 2h14v13H1z', '#124') + f('M2 3h12v11z', '#2ce43e') + f('M2 3l12 11H2z', '#118574'),
  fillpart: f('M2 2l12 12H2z', '#247468') + s('M2 2v12h12M7 3h5l2 3-4 2', '#244', 1.300), fillnode: f('M1 2l13 12H1z', '#28d538') + s('M1 2v12h13l-5-5M8 4l2-2 3 2-1 3H9z', '#252', 1.300), outline: s('M2 3h6v3h5l-2 3v4H7v-3H2zM10 2h5v4', '#187b28', 1.400),
  back: f('M1 6l5-4v3h7v6h-3V8H6v3z', '#1a8d39') + s('M10 10v4h4', '#222'), rotate: s('M2 2l5 5M5 1l4 4', '#c44', 2) + f('M10 15h5v-5z', '#24e') + s('M8 8l4 4', '#888'),
  triangles: s('M2 11l4-8 3 4M2 11h4', '#555') + s('M6 13l4-7 5 7z', '#c33'), stack: s('M6 2h5v5H6zM1 10l3-3h9l3 3v4H1zM5 10h6v3H5z', '#333', 1.200),
  scale: box('#2a2a80') + s('M3 13L15 1', '#c22', 1.500), gridred: box('#26268a', 1.500) + f('M5 5h2l1-2 1 2h2v2l2 1-2 1v2H9l-1 2-1-2H5V9L3 8l2-1z', '#f44b21') + nodes([[8, 8]], '#fdd', 1.4),
  graybox: box('#aaa') + s('M8 4l6-3', '#aaa'), graybox2: box('#aaa') + s('M14 1v11', '#999'), graybox3: box('#aaa') + s('M7 9V5h6', '#999') + nodes([[13, 3]], '#999', 2.5),
  copybox: s('M1.500 5.500l3-3h5l-3 3zM7.500 8.500h6v6h-6z', '#222', 1.300) + s('M9 4h4v4M11 6l2 2 2-2', '#c22', 1.300), copybox2: s('M7 5l3-3h5l-3 3zM1.500 8.500h6v6h-6z', '#222', 1.300) + s('M8 12h3V6M9 8l2-2 2 2', '#c22', 1.300),
  skew: s('M2 6v8h12V2', '#22a', 1.500) + s('M2 6l12-4', '#d33') + nodes([[2, 6], [14, 2], [2, 14], [14, 14]], '#22a', 1.8), nobox: box('#333', 1.500) + s('M1 1l14 14M15 1L1 15', '#b44a72', 1.300)
};

Object.assign(icons, {
  't-tools': tag(f('M5 6h6v7H5z', '#d11b25') + s('M5 5h6M7 4v3', '#222', 1.500)), 't-color': tag('<circle cx="8" cy="9" r="4.500" fill="#eee32b" stroke="#887"/>' + nodes([[6, 8], [9, 7], [10, 10]], '#457', .8)),
  't-select': tag(f('M6 4v8l2-1 1 3 2-1-1-3h3z', '#111')), 't-draw': tag(f('M4 5h8v8H4z', '#777') + s('M5 7.500h6M5 10.500h6', '#eee')),
  't-blocks': tag(s('M4 5l8 7M12 5l-8 7', '#33a') + nodes([[4, 5], [12, 5], [4, 12], [12, 12], [8, 9]], '#226', 1.5)), 't-library': tag(s('M3 12l2-6 3 6', '#333') + f('M9 6h2v7H9z', '#c33') + f('M12 5h2v8h-2z', '#caa43a')),
  't-design': tag(f('M4 5h4v4h6v4H7l-1-3H3z', '#dfc438') + s('M5 6l6 5', '#765')), 't-material': tag(f('M4 7l4-3 5 3v4l-5 3-4-3z', '#9e941d') + f('M4 7l4-2 4 2-4 2z', '#f6ed4b')),
  't-environment': tag(f('M4 4h9v9H4z', '#124') + f('M5 5h7v7H5z', '#23c6a0')), 't-luminance': tag('<circle cx="8" cy="9" r="3.500" fill="#fff" stroke="#4268d8" stroke-width="1.500"/>' + s('M8 6v6', '#4268d8')),
  't-advanced': tag(f('M3 11l3-7h5v5l3 2-2 2z', '#997822') + f('M6 6h3v3H6z', '#f9e64c')),
  'w-start': f('M2 3l5-1v5H2zM8 2l6-1v6H8zM2 8h5v6l-5-1zM8 8h6v7l-6-1z', '#fff'), 'w-tasks': s('M3 1v3h7V1M3 6.500h7v4H3zM3 15v-3h7v3M13 1v3M13 6v9', '#ddd', 1.300),
  'w-outlook': tile('#f6cb66', '<circle cx="5" cy="8" r="3" fill="none" stroke="#e89b20" stroke-width="2"/>') + f('M9 6h6v8H9z', '#fff2c9') + s('M9 7l3 3 3-3', '#e89b20'),
  'w-ppt': tile('#f6d9cc', s('M3 12V4h3c4 0 4 5 0 5H4', '#d9552c', 2)) + '<circle cx="12" cy="9" r="3" fill="#d9552c"/>', 'w-edge': s('M14 9H5c0 5 5 6 8 4M3 7c1-6 11-7 11 2', '#1686d9', 3) + s('M3 9c-1-4 6-5 7-2', '#1686d9', 2),
  'w-firefox': '<circle cx="8" cy="8" r="7" fill="#ed721d"/>' + f('M5 4c3-3 8-1 8 4-2 4-7 4-8-1z', '#3458a2') + f('M1 4c2 1 4 1 6 2L5 9c1 3 5 4 8 2-3 5-12 4-12-4z', '#f8b833'),
  'w-ie': '<circle cx="8" cy="9" r="5.500" fill="none" stroke="#42b8ea" stroke-width="2.500"/>' + s('M3 9h10', '#bcecff', 2) + s('M1 14C3 8 11 0 15 2c1 1 0 3-1 4', '#f4cd3c', 1.500),
  'w-excel': tile('#a9d8b7', s('M3 4l5 8M8 4l-5 8', '#228446', 1.800)) + s('M10 5h4M10 8h4M10 11h4', '#228446'),
  'w-remote': f('M1 1h11v9H1z', '#dce') + f('M2 2h9v7H2z', '#2337c0') + f('M4 11h8l2 4H2z', '#bcc') + '<circle cx="13" cy="12" r="3" fill="#d3e0d1" stroke="#789"/>' + s('M11.500 12l1 1 2-2', '#292'),
  'w-flower': nodes([[8, 3], [12.500, 5.500], [12.500, 10.500], [8, 13], [3.500, 10.500], [3.500, 5.500]], '#95cfe9', 2.7) + nodes([[8, 8]], '#fff', 2.5) + s('M8 1v14M2 5l12 6M14 5L2 11', '#357fa8', .8),
  'w-people': s('M1 15c0-6 7-6 7 0', '#eee') + '<circle cx="4.500" cy="8" r="2" fill="none" stroke="#eee"/><circle cx="11" cy="4" r="2.300" fill="none" stroke="#eee"/>' + s('M8 10c1-4 7-4 7 2', '#eee'),
  'w-up': s('M3 10l5-5 5 5', '#eee', 1.300), 'w-wifi': s('M2 13C2 7 8 2 13 3M5 13c0-4 4-8 8-7M8 13c0-2 2-4 5-4M11 13l2-2', '#ddd', 1.300),
  'w-dropbox': f('M4 2l4 3-4 3-4-3zM12 2l4 3-4 3-4-3zM4 8l4 3-4 2-4-2zM12 8l4 3-4 2-4-2zM8 11l3 2-3 2-3-2z', '#e8e8e8'),
  'w-sound': s('M1 6h2l4-3v10l-4-3H1zM9 6q2 2 0 4M11 4q4 4 0 8M13 2q5 6 0 12', '#ddd'), 'w-note': s('M2.500 2.500h12v9H10l-2 2.500v-2.500H2.500z', '#eee', 1.200)
});

const G = '#77707c', B = '#4a4f8c', R = '#c2566c';
const O = (x, y, r, c = B) => `<circle cx="${x}" cy="${y}" r="${r}" fill="none" stroke="${c}"/>`;
const lock = nodes([[12, 11]], '#4d43c8', 1.8);
Object.assign(icons, {
  's-hand': s('M5 12V7l3 2V5l3 3v4z', G), 's-mid': s('M3 8h10M8 6v4M11 6l2 2-2 2', '#765'), 's-vertex': s('M4 11l8-6M4 11h6', '#965'), 's-red': s('M4 12l8-8', R) + nodes([[4, 12], [12, 4]], R, 1),
  's-arc': s('M4 11q0-6 5-5l3 4', '#865'), 's-box': s('M4 5h7v7H4zM6 3h7v7M4 12l9-8M5 5l6 6', '#555'), 's-center': O(8, 8, 4, '#964') + s('M8 6v4M6 8h4', '#964'), 's-x': s('M4 4l8 8M12 4l-8 8', '#666'),
  's-dots': nodes([[4, 4], [8, 4], [12, 4], [4, 8], [4, 12], [12, 12]], '#aaa', .7), 's-mag': s('M4 4l5 5M4 8h4V4M9 8l4 4M5 12l4-6', G), 's-quad': s('M4 12l2-7h5l2 7zM5 11l6-5', '#755'), 's-curve': s('M4 6q4-3 5 1t4 4M4 9h4', '#565'),
  's-tee': s('M8 3v9M4 12.500h8', R), 's-plus': s('M8 2v12M3 8h10', R), 's-star': s('M4 4l8 8M12 4l-8 8M8 3v10', '#aaa'), 's-tree': f('M8 3l5 9H3z', '#655'),
  's-magnet': s('M5 12V8c0-5 6-5 6 0v4M3 12h4M9 12h4', '#532', 1.500), 's-apex': s('M4 3v9M4 3l8 9M8 5h3', '#964'), 's-tan': s('M3 13l5-9 5 9', '#a64'), 's-pink': s('M4 4l5 3v6M5 4v7l5 2V8', R, 1.300), 's-pts': nodes([[4, 12], [8, 8], [12, 4]], '#777', .9),
  'l-line': s('M4 12l8-8', B) + nodes([[4, 12], [12, 4]], B, 1), 'l-poly': s('M3 6h6q3 1 0 3t2 4M3 12l3-4', B), 'l-center': O(8, 8, 5) + nodes([[8, 8]], '#22227b', 1.3), 'l-tri': s('M4 4l8 2-5 6z', B),
  'l-rect': s('M4 4h8v8H4z', B) + nodes([[4, 4], [12, 4], [4, 12], [12, 12]], B, 1), 'l-rot': s('M3 9l5-6 4 4-3 5-4-2M10 12h3', B), 'l-perp': s('M4 9l8-6M7 7l5 5', G), 'l-par': s('M3 11l7-7M6 13l8-8', B),
  'l-circ': O(8, 9, 4) + s('M4 4h7', B), 'l-tan': s('M3 4q6 0 5 4t-5 4M8 8l5 5', B), 'l-tan2': s('M4 4q4 0 4 4t-5 4M8 8l6 4', B), 'l-tan3': s('M3 5h5q5 3 0 6M8 8h5', B), 'l-cross': s('M5 8h7M8 4v8', B), 'l-down': s('M8 3v10M4 9l4 4 4-4', B),
  'c-solid': nodes([[8, 8]], '#434990', 5) + s('M7 8h6', '#fff'), 'c-dots': O(8, 8, 4) + nodes([[3, 8], [13, 8], [8, 3], [8, 13]], B, 1), 'c-open': s('M12 5C7 2 2 7 6 11q4 2 7-1M3 4h4', B), 'c-tan': O(8, 9, 4) + s('M3 4h10M8 13h4', B), 'c-ear': O(8, 8, 4) + s('M4 4h2M10 4l3 2', B), 'c-pin': O(8, 7, 3) + s('M6 10v3h4v-3', B),
  'c-ell': '<ellipse cx="8" cy="8" rx="5" ry="3" fill="none" stroke="#666a92"/>', 'c-rotell': s('M4 12q0-7 8-8 0 7-8 8z', G), 'c-cap': s('M3 10q0-4 5-4t5 4-5 3-5-3zM6 6V3h4v3', G),
  'k-a': s('M3 6h6', B) + lock, 'k-b': s('M4 8l4-3v4', B) + lock, 'k-c': s('M4 4v8M7 4v8M3 9h5', '#946289') + lock, 'k-d': s('M4 4l5 4-5 3z', G) + lock, 'k-e': O(7, 7, 3) + lock, 'k-f': s('M10 4l-5 4 5 4', '#999'), 'k-g': O(7, 6, 2.5, '#555') + lock, 'k-h': s('M3 9l5-5M5 11l5-5', '#555') + lock, 'k-i': s('M4 3v7h6M7 4v8h6', B) + lock, 'k-j': s('M3 4h4v8H3M9 4h4M9 12h4M11 4v8', B), 'k-k': s('M4 4v6h5V5', B) + lock, 'k-l': s('M4 7h7v5', B, 1.500)
});

const draw = (name, size = 16) => `<svg width="${size}" height="${size}" viewBox="0 0 16 16" fill="none" aria-hidden="true">${icons[name]}</svg>`;
const small = { collapse: 14, expand: 14, model: 10, sheet: 10, eye: 8, origin: 12 };

document.querySelectorAll('[data-icon]').forEach(el => { el.innerHTML = draw(el.dataset.icon, small[el.dataset.icon]); });
document.querySelectorAll('[data-icons]').forEach(el => {
  const size = el.matches('.tiles') ? 11 : el.matches('.window-controls') ? 13 : el.matches('.vgroup') ? 15 : 16;
  el.innerHTML = el.dataset.icons.split(' ').map(n => {
    const name = n.replace('*', '');
    return `<button class="${n[0] === '*' ? 'active' : ''}" aria-label="${name.replace(/^.-/, '')}">${draw(name, size)}</button>`;
  }).join('');
});

const fields = [['Scale', '1', 1], ['Scale', '1', 1], ['Scale', '1', 1], ['Size X', '13.82'], ['Size Y', '2.530'], ['Size Z', '1.591'], ['Pos X', '4.880'], ['Pos Y', '6.434'], ['Pos Z', '0 in'], ['Delta', '0 in'], ['Delta', '0 in'], ['Delta', '0 in'], ['Rot X', '0', 1], ['Rot Y', '0', 1], ['Rot Z', '0', 1], ['Delta', '0 in'], ['Delta', '0', 1]];
document.getElementById('fields').innerHTML = fields.map(([label, value, spin], i) =>
  `<div class="field"><label for="f${i}">${label}</label><div class="spin"><input id="f${i}" value="${value}">${spin ? '<span><svg width="13" height="15" viewBox="0 0 13 15"><path d="M0 7.500h13" stroke="#bbb"/><path d="M4.500 5l2-2 2 2zM4.500 10l2 2 2-2z" fill="#222"/></svg></span>' : ''}</div></div>`).join('');

const STEP = 47;
const hruler = document.getElementById('hruler');
const vruler = document.getElementById('vruler');

function drawRulers() {
  const width = hruler.getBoundingClientRect().width;
  const height = vruler.getBoundingClientRect().height;
  let ticks = `M0 11.500H${width}`, labels = '';
  for (let n = -5; 268 + n * STEP < width - 6; n++) {
    const x = 268 + n * STEP;
    ticks += `M${x + .5} 1V12`;
    for (let k = 1; k < 8; k++) ticks += `M${x + Math.round(k * STEP / 8) + .5} ${k === 4 ? 8 : 9}V12`;
    labels += `<text x="${x + 2}" y="8">${x + 20 < width ? n + ' in' : n}</text>`;
  }
  for (let k = 1; k < 6; k++) ticks += `M${33 - Math.round(k * STEP / 8) + .5} 9V12`;
  hruler.innerHTML = `<path d="${ticks}"/>${labels}<path d="M735.500 0V12" style="stroke:#c06a9c"/>`;

  ticks = `M11.500 0V${height}`;
  labels = '';
  for (let n = 9; 453 - n * STEP < height + 17; n--) {
    const y = 453 - n * STEP;
    ticks += `M1 ${y + .5}H12`;
    for (let k = 1; k < 8; k++) ticks += `M${k === 4 ? 8 : 9} ${y - Math.round(k * STEP / 8) + .5}H12`;
    labels += `<text transform="translate(8 ${y - 1}) rotate(-90)">${n} in</text>`;
  }
  vruler.innerHTML = `<path d="${ticks}"/>${labels}<path d="M0 425.500H12" style="stroke:#c06a9c"/>`;
}
drawRulers();
window.addEventListener('resize', drawRulers);
```
